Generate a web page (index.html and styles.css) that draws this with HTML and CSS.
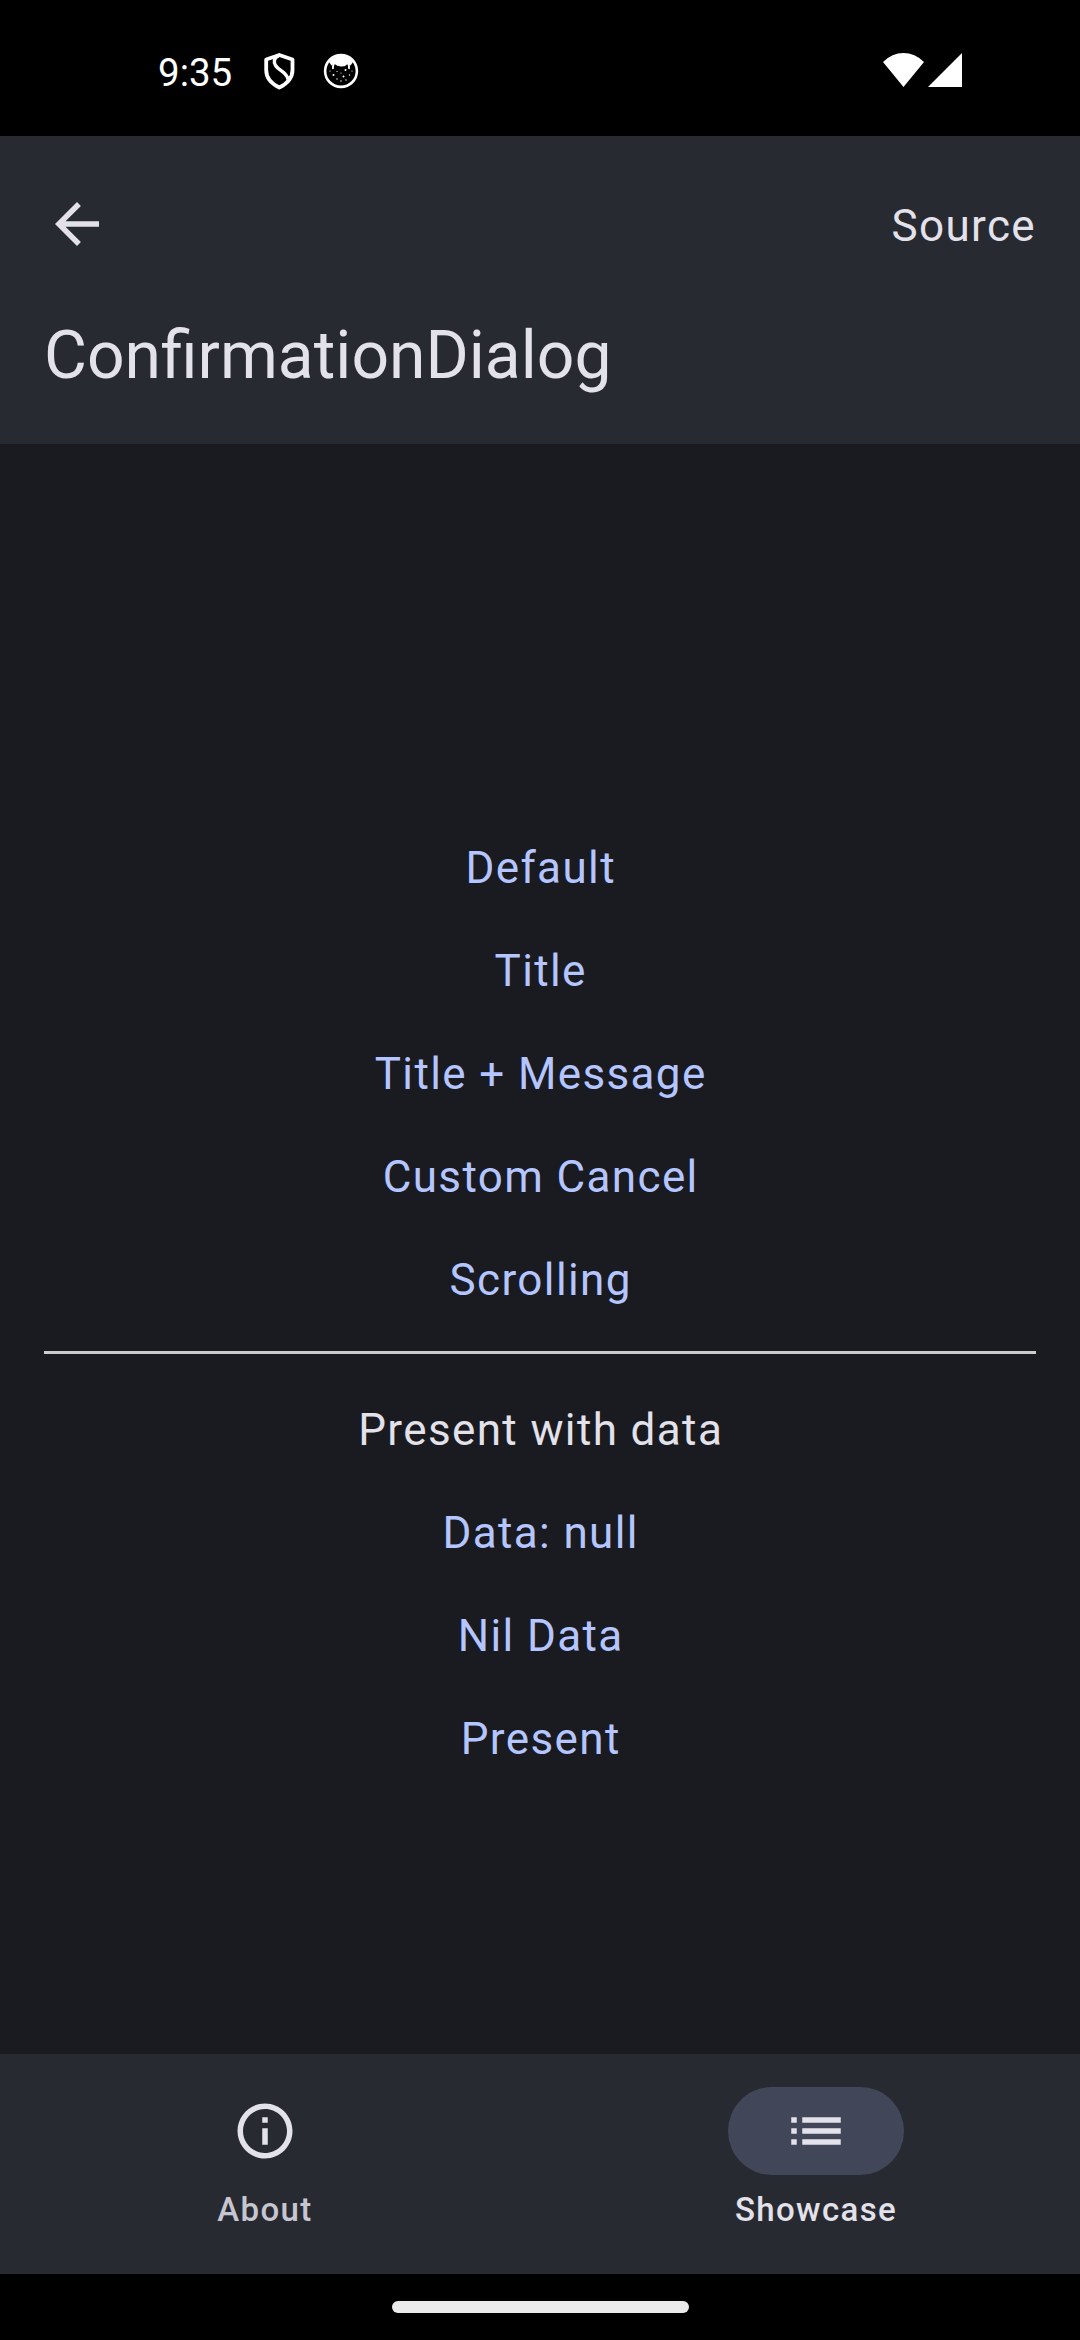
FILE: index.html
```html
<!DOCTYPE html>
<html lang="en">
<head>
<meta charset="utf-8">
<title>ConfirmationDialog</title>
<link rel="stylesheet" href="styles.css">
</head>
<body>
<div class="screen">
  <div class="status">
    <span class="clock">9:35</span>
    <svg class="shield" viewBox="0 0 32 38"><path d="M16.300 3 29.500 7.500V18C29.500 26.500 23.500 32 16.300 35.500C9 32 3.200 26.500 3.200 18V7.500Z" fill="none" stroke="#fff" stroke-width="3.800" stroke-linejoin="round"/><path d="M16 3.500C10.500 6 10.500 10 12.500 13.500C16 19 24 20 25 27.500" fill="none" stroke="#fff" stroke-width="3.400"/></svg>
    <svg class="cat" viewBox="0 0 36 36"><circle cx="18" cy="18" r="15.900" fill="none" stroke="#fff" stroke-width="2.600"/><path d="M6 9Q11 2 18 2T30 9L27.500 12.500 24.500 11Q22 14 18 13.500T11.500 11L8.500 12.500Z" fill="#fff"/><path d="M11 10.500Q9.500 13 10 16M25 10.500Q26.500 13 26 16" fill="none" stroke="#fff" stroke-width="1.800"/><g fill="#fff"><circle cx="10.500" cy="22" r="1"/><circle cx="22.500" cy="17" r="1"/><circle cx="14" cy="18.500" r=".6"/><circle cx="18" cy="20" r=".6"/><circle cx="20.500" cy="23.500" r="1"/><circle cx="26.500" cy="22" r=".7"/><circle cx="14" cy="26" r=".7"/><circle cx="18" cy="28" r=".7"/><circle cx="23" cy="27" r=".7"/><circle cx="7" cy="18" r=".6"/><circle cx="29" cy="18" r=".6"/></g></svg>
    <svg class="signals" viewBox="0 0 80 36"><path d="M0 10Q9 1 20.500 1T41 10L20.500 35ZM45 35 79 1V35Z" fill="#fff"/></svg>
  </div>
  <header class="header">
    <div class="toolbar">
      <svg class="icon" viewBox="0 0 24 24"><path d="M20 11H7.830l5.590-5.590L12 4l-8 8 8 8 1.410-1.410L7.830 13H20v-2z" fill="#e3e1e9"/></svg>
      <span class="source">Source</span>
    </div>
    <h1 class="title">ConfirmationDialog</h1>
  </header>
  <main class="content">
    <a class="row">Default</a>
    <a class="row">Title</a>
    <a class="row">Title + Message</a>
    <a class="row">Custom Cancel</a>
    <a class="row">Scrolling</a>
    <div class="divider"></div>
    <div class="row plain">Present with data</div>
    <a class="row">Data: null</a>
    <a class="row">Nil Data</a>
    <a class="row">Present</a>
  </main>
  <nav class="nav">
    <div class="tab">
      <div class="pill"><svg class="icon" viewBox="0 0 24 24"><path d="M11 7h2v2h-2zm0 4h2v6h-2zm1-9C6.480 2 2 6.480 2 12s4.480 10 10 10 10-4.480 10-10S17.520 2 12 2zm0 18c-4.410 0-8-3.590-8-8s3.590-8 8-8 8 3.590 8 8-3.590 8-8 8z" fill="#e3e1e9"/></svg></div>
      <span class="label">About</span>
    </div>
    <div class="tab active">
      <div class="pill"><svg class="icon" viewBox="0 0 24 24"><path d="M3 13h2v-2H3v2zm0 4h2v-2H3v2zm0-8h2V7H3v2zm4 4h14v-2H7v2zm0 4h14v-2H7v2zM7 7v2h14V7H7z" fill="#e3e1e9"/></svg></div>
      <span class="label">Showcase</span>
    </div>
  </nav>
  <div class="gesture"><div class="handle"></div></div>
</div>
</body>
</html>
```
FILE: styles.css
```css
body {
  margin: 0;
  background: #000;
  font-family: Roboto, sans-serif;
}
.screen {
  display: flex;
  flex-direction: column;
  width: 1080px;
  height: 2340px;
}
.status {
  display: flex;
  box-sizing: border-box;
  height: 136px;
  padding: 52px 117px 0 158px;
  color: #fff;
}
.clock {
  width: 105px;
  font-size: 38.5px;
  line-height: 42px;
}
.shield {
  width: 32px;
  height: 38px;
}
.cat {
  width: 36px;
  height: 36px;
  margin-left: 28px;
  margin-top: 1px;
}
.signals {
  width: 80px;
  height: 36px;
  margin-left: auto;
}
.header {
  height: 308px;
  background: #282a32;
  color: #e3e1e9;
}
.toolbar {
  display: flex;
  align-items: center;
  justify-content: space-between;
  height: 176px;
  padding: 0 44px;
}
.icon {
  display: block;
  width: 66px;
  height: 66px;
}
.source {
  padding-top: 4px;
  font-size: 44px;
  line-height: 66px;
  letter-spacing: 1.375px;
}
.title {
  margin: 0;
  padding: 0 44px;
  font-size: 66px;
  font-weight: 400;
  line-height: 88px;
}
.content {
  flex: 1;
  display: flex;
  flex-direction: column;
  padding: 373px 44px 0;
  background: #1a1b20;
}
.row {
  height: 103px;
  padding-left: 1.4px;
  font-size: 44px;
  line-height: 103px;
  letter-spacing: 1.375px;
  text-align: center;
  color: #b4c5ff;
}
.plain {
  color: #e3e1e9;
}
.divider {
  height: 3px;
  margin: 19px 0 25px;
  background: #c9cdcb;
}
.nav {
  display: flex;
  gap: 22px;
  height: 220px;
  background: #282a32;
}
.tab {
  flex: 1;
  display: flex;
  flex-direction: column;
  align-items: center;
  padding-top: 33px;
  color: #c6c6d0;
}
.active {
  color: #e3e1e9;
}
.pill {
  display: flex;
  align-items: center;
  justify-content: center;
  width: 176px;
  height: 88px;
  border-radius: 44px;
}
.active .pill {
  background: #424659;
}
.label {
  margin-top: 12px;
  padding-left: 1px;
  font-size: 33px;
  font-weight: 500;
  line-height: 45px;
  letter-spacing: 1.375px;
}
.gesture {
  display: flex;
  justify-content: center;
  align-items: flex-start;
  box-sizing: border-box;
  height: 66px;
  padding-top: 27px;
}
.handle {
  width: 297px;
  height: 12px;
  border-radius: 6px;
  background: #ebebeb;
}
```
